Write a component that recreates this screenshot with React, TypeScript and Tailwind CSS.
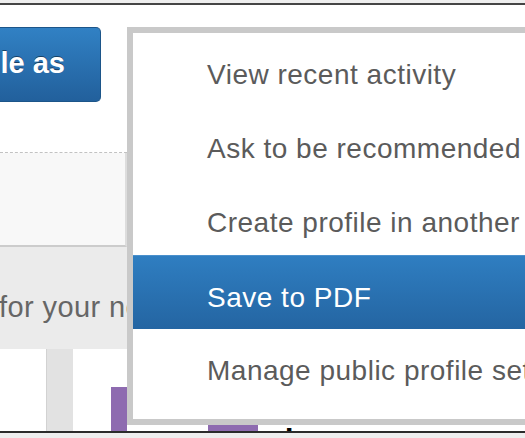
import React from "react";

const items = [
  "View recent activity",
  "Ask to be recommended",
  "Create profile in another language",
  "Save to PDF",
  "Manage public profile settings",
];

export default function App() {
  return (
    <div
      className="relative w-[525px] h-[438px] overflow-hidden bg-[#f4f4f4]"
      style={{ fontFamily: '"Liberation Sans", Arial, Helvetica, sans-serif' }}
    >
      <div className="h-[3px] bg-[#eeeeee]" />
      <div className="h-[2px] bg-[#454545]" />
      <div className="w-[525px] bg-white">
        {/* top area with button */}
        <div className="h-[147px] pt-[22px] bg-white">
          <div className="flex justify-end items-center w-[101px] h-[75px] overflow-hidden whitespace-nowrap rounded-r-[5px] border border-l-0 border-[#1c5589] bg-gradient-to-b from-[#3181c4] to-[#22609c] pr-[35px]">
            <span
              className="text-[29px] font-bold text-white leading-[29px] mt-[-3px]"
              style={{ textShadow: "0 -1px 0 rgba(0,0,0,0.45)" }}
            >
              View profile as
            </span>
          </div>
        </div>
        {/* dashed separator + panel */}
        <div className="w-[127px] border-t border-dashed border-[#c2c2c2]" />
        <div className="w-[127px] h-[94px] bg-[#f8f8f8] border-r-2 border-[#dddddd] border-b-2 border-b-[#cccccc]" />
      </div>
      {/* gray band */}
      <div className="h-[102px] bg-[#ebebeb] pt-[45px] whitespace-nowrap">
        <span className="ml-[-1px] text-[29px] leading-[30px] text-[#666666] tracking-[0.4px]">
          for your network
        </span>
      </div>
      {/* cards */}
      <div className="flex h-[82px] bg-[#e2e2e2]">
        <div className="w-[47px] bg-white border-r border-[#d2d2d2]" />
        <div className="ml-[26px] flex-1 bg-white flex items-start overflow-hidden">
          <div className="ml-[38px] mt-[38px] w-[16px] h-[100px] bg-[#8e6bb0]" />
          <div className="ml-[81px] mt-[76px] w-[50px] h-[60px] bg-[#8e6bb0]" />
          <div className="ml-[27px] mt-[74px] text-[30px] leading-[30px] font-bold text-black">
            Languages
          </div>
        </div>
      </div>
      <div className="h-[2px] bg-[#2b2b2b]" />
      <div className="h-[5px] bg-[#eeeeee]" />

      {/* dropdown menu */}
      <div className="absolute left-[127px] top-[27px] w-[420px] h-[398px] border-[6px] border-[#c9c9c9] bg-white">
        {items.map((label, i) => {
          const active = i === 3;
          return (
            <div
              key={label}
              className={
                active
                  ? "h-[74px] pt-[28px] pl-[74px] whitespace-nowrap text-[28px] leading-[28px] tracking-[0.5px] text-white bg-gradient-to-b from-[#2f7ec1] to-[#2465a2] border-t border-[#4a90cc]"
                  : "h-[74px] pt-[28px] pl-[74px] whitespace-nowrap text-[28px] leading-[28px] tracking-[0.5px] text-[#5b5b5b]"
              }
            >
              {label}
            </div>
          );
        })}
      </div>
    </div>
  );
}
